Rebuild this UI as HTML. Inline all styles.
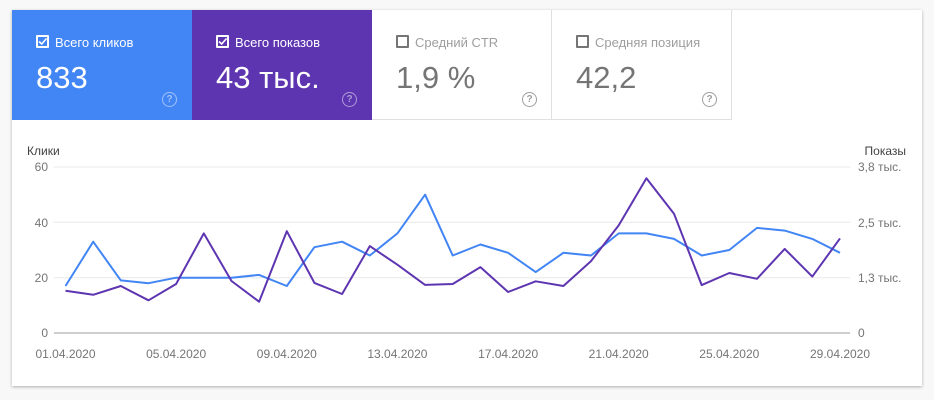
<!DOCTYPE html>
<html><head><meta charset="utf-8"><style>
html,body{margin:0;padding:0;background:#f8f8f8;width:934px;height:400px;overflow:hidden;font-family:"Liberation Sans",sans-serif}
.card{position:absolute;left:12px;top:10px;width:910px;height:376px;background:#fff;box-shadow:0 1px 3px rgba(0,0,0,.3)}
.tile{position:absolute;top:0;width:180px;height:110px;box-sizing:border-box}
.lbl{position:absolute;left:43px;top:25px;font-size:13px}
.num{position:absolute;left:24px;top:50px;font-size:31px}
.cb{position:absolute;left:24px;top:25px;width:9px;height:9px;border:2px solid;border-radius:1px}
.help{position:absolute;left:150px;top:82px;width:13px;height:13px;border:1.5px solid;border-radius:50%;font-size:10px;line-height:13px;text-align:center;font-weight:bold}
</style></head><body>
<div class="card">
 <div class="tile" style="left:0;background:#4285f4;color:#fff">
  <div class="cb" style="border-color:#fff"><svg width="9" height="9" style="position:absolute;left:0;top:0"><path d="M1 4.5 L3.7 7 L8.5 1.5" stroke="#fff" stroke-width="1.6" fill="none"/></svg></div>
  <div class="lbl">Всего кликов</div><div class="num">833</div>
  <div class="help" style="border-color:rgba(255,255,255,.5);color:rgba(255,255,255,.5)">?</div>
 </div>
 <div class="tile" style="left:180px;background:#5e35b1;color:#fff">
  <div class="cb" style="border-color:#fff"><svg width="9" height="9" style="position:absolute;left:0;top:0"><path d="M1 4.5 L3.7 7 L8.5 1.5" stroke="#fff" stroke-width="1.6" fill="none"/></svg></div>
  <div class="lbl">Всего показов</div><div class="num">43 тыс.</div>
  <div class="help" style="border-color:rgba(255,255,255,.5);color:rgba(255,255,255,.5)">?</div>
 </div>
 <div class="tile" style="left:360px;color:#757575;border-right:1px solid #e0e0e0;border-bottom:1px solid #e0e0e0">
  <div class="cb" style="border-color:#757575"></div>
  <div class="lbl" style="color:#9e9e9e">Средний CTR</div><div class="num">1,9 %</div>
  <div class="help" style="border-color:#9e9e9e;color:#9e9e9e">?</div>
 </div>
 <div class="tile" style="left:540px;color:#757575;border-right:1px solid #e0e0e0;border-bottom:1px solid #e0e0e0">
  <div class="cb" style="border-color:#757575"></div>
  <div class="lbl" style="color:#9e9e9e">Средняя позиция</div><div class="num">42,2</div>
  <div class="help" style="border-color:#9e9e9e;color:#9e9e9e">?</div>
 </div>
</div>
<svg width="934" height="400" style="position:absolute;left:0;top:0" font-family="Liberation Sans, sans-serif" font-size="12">
 <text x="27" y="155" fill="#424242">Клики</text>
 <text x="906" y="155" fill="#424242" text-anchor="end">Показы</text>
 <g stroke="#e8e8e8" stroke-width="1">
  <line x1="54" y1="167" x2="850" y2="167"/><line x1="54" y1="222.3" x2="850" y2="222.3"/><line x1="54" y1="277.7" x2="850" y2="277.7"/>
 </g>
 <line x1="54" y1="333" x2="850" y2="333" stroke="#9e9e9e"/>
 <g fill="#757575" text-anchor="end">
  <text x="48" y="171">60</text><text x="48" y="227">40</text><text x="48" y="282">20</text><text x="48" y="337">0</text>
 </g>
 <g fill="#757575">
  <text x="858" y="171">3,8 тыс.</text><text x="858" y="227">2,5 тыс.</text><text x="858" y="282">1,3 тыс.</text><text x="858" y="337">0</text>
 </g>
 <g fill="#757575" text-anchor="middle">
  <text x="65.5" y="358">01.04.2020</text><text x="176.1" y="358">05.04.2020</text><text x="286.8" y="358">09.04.2020</text><text x="397.4" y="358">13.04.2020</text><text x="508.1" y="358">17.04.2020</text><text x="618.7" y="358">21.04.2020</text><text x="729.3" y="358">25.04.2020</text><text x="840" y="358">29.04.2020</text>
 </g>
 <polyline fill="none" stroke="#4285f4" stroke-width="2" stroke-linejoin="round" points="65.5,286 93.2,241.7 120.8,280.4 148.5,283.2 176.1,277.7 203.8,277.7 231.5,277.7 259.1,274.9 286.8,286 314.4,247.2 342.1,241.7 369.8,255.5 397.4,233.4 425.1,194.7 452.7,255.5 480.4,244.5 508.1,252.8 535.7,272.1 563.4,252.8 591,255.5 618.7,233.4 646.4,233.4 674,238.9 701.7,255.5 729.3,250 757,227.9 784.7,230.6 812.3,238.9 840,252.8"/>
 <polyline fill="none" stroke="#5e35b1" stroke-width="2" stroke-linejoin="round" points="65.5,290.7 93.2,294.8 120.8,286 148.5,300.3 176.1,284 203.8,233.4 231.5,281 259.1,301.7 286.8,231.2 314.4,282.9 342.1,294 369.8,246.1 397.4,264.7 425.1,284.9 452.7,284 480.4,267.1 508.1,292 535.7,281.3 563.4,286 591,261.1 618.7,225.4 646.4,178.3 674,213.7 701.7,285.1 729.3,273 757,278.8 784.7,248.9 812.3,276.6 840,238.4"/>
</svg>
</body></html>
